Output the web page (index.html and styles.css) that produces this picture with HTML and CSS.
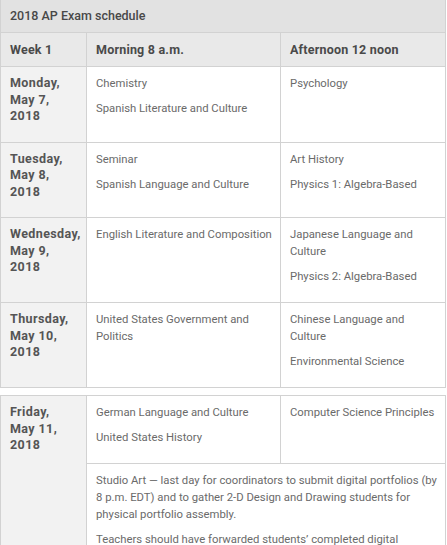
FILE: index.html
```html
<!DOCTYPE html>
<html>
<head>
<meta charset="utf-8">
<link rel="stylesheet" href="styles.css">
</head>
<body>
<table class="sched">
  <colgroup><col class="c1"><col class="c2"><col class="c3"></colgroup>
  <thead>
    <tr><th colspan="3" class="title">2018 AP Exam schedule</th></tr>
    <tr class="head"><th>Week 1</th><th>Morning 8 a.m.</th><th>Afternoon 12 noon</th></tr>
  </thead>
  <tbody>
    <tr>
      <th class="day"><p>Monday,<br>May 7,<br>2018</p></th>
      <td><p>Chemistry</p><p>Spanish Literature and Culture</p></td>
      <td><p>Psychology</p></td>
    </tr>
    <tr>
      <th class="day"><p>Tuesday,<br>May 8,<br>2018</p></th>
      <td><p>Seminar</p><p>Spanish Language and Culture</p></td>
      <td><p>Art History</p><p>Physics 1: Algebra-Based</p></td>
    </tr>
    <tr>
      <th class="day"><p>Wednesday,<br>May 9,<br>2018</p></th>
      <td><p>English Literature and Composition</p></td>
      <td><p>Japanese Language and Culture</p><p>Physics 2: Algebra-Based</p></td>
    </tr>
    <tr>
      <th class="day"><p>Thursday,<br>May 10,<br>2018</p></th>
      <td><p>United States Government and Politics</p></td>
      <td><p>Chinese Language and Culture</p><p>Environmental Science</p></td>
    </tr>
  </tbody>
</table>
<table class="sched second">
  <colgroup><col class="c1"><col class="c2"><col class="c3"></colgroup>
  <tbody>
    <tr>
      <th class="day" rowspan="2"><p>Friday,<br>May 11,<br>2018</p></th>
      <td><p>German Language and Culture</p><p>United States History</p></td>
      <td><p>Computer Science Principles</p></td>
    </tr>
    <tr>
      <td colspan="2"><p>Studio Art — last day for coordinators to submit digital portfolios (by 8 p.m. EDT) and to gather 2-D Design and Drawing students for physical portfolio assembly.</p><p>Teachers should have forwarded students’ completed digital portfolios to their AP coordinator.</p></td>
    </tr>
  </tbody>
</table>
</body>
</html>
```

FILE: styles.css
```css
html, body {
  margin: 0;
  padding: 0;
  background: #ffffff;
}
body {
  font-family: Roboto, "Liberation Sans", Arial, sans-serif;
  color: #666666;
  overflow: hidden;
}
.sched {
  width: 445px;
  border-collapse: collapse;
  table-layout: fixed;
  margin: 0;
}
.second {
  margin-top: 7px;
}
.c1 { width: 86px; }
.c2 { width: 194px; }
.c3 { width: 165px; }
.sched th, .sched td {
  border: 1px solid #d2d2d2;
  padding: 8px 4px 9px 9px;
  vertical-align: top;
  text-align: left;
  font-size: 11.3px;
  line-height: 17px;
}
.sched p {
  margin: 0 0 8px 0;
}
.sched .title {
  background: #e2e2e2;
  color: #484848;
  font-weight: 500;
  font-size: 12.5px;
  padding: 7px 9px 8px 9px;
  border-top: none;
}
.head th {
  background: #e9e9e9;
  color: #4a4a4a;
  font-weight: 700;
  font-size: 12.5px;
  padding: 8px 9px;
  letter-spacing: 0.2px;
}
.sched .day {
  background: #f2f2f2;
  color: #555555;
  font-weight: 700;
  font-size: 12.5px;
  letter-spacing: 0.4px;
  line-height: 16.5px;
  padding-top: 8px;
}
.sched td {
  color: #6a6a6a;
}
```
